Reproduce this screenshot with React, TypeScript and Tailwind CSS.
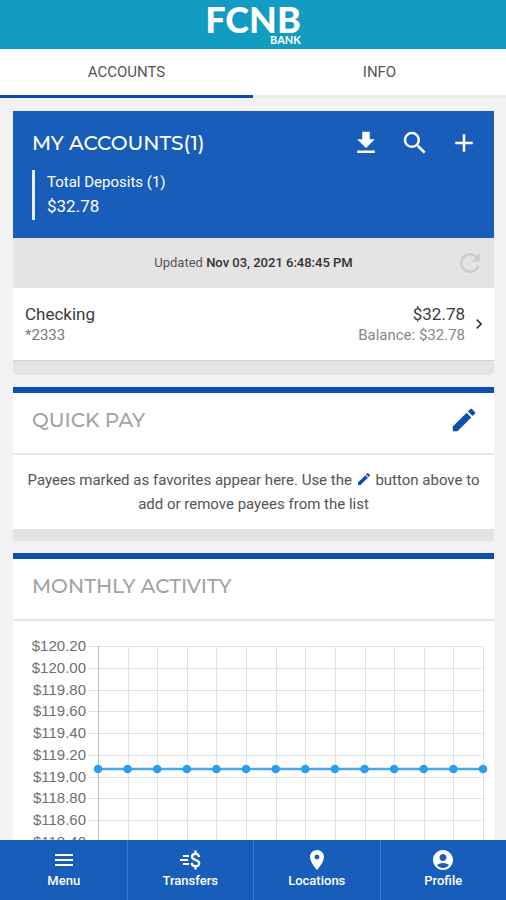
import type { ReactNode } from "react";
import {
  MdAccountCircle,
  MdAdd,
  MdChevronRight,
  MdEdit,
  MdFileDownload,
  MdLocationOn,
  MdMenu,
  MdRefresh,
  MdSearch,
} from "react-icons/md";

const TICKS = [
  "$120.20", "$120.00", "$119.80", "$119.60", "$119.40", "$119.20",
  "$119.00", "$118.80", "$118.60", "$118.40", "$118.20", "$118.00",
];
const LEFT = 85;
const RIGHT = 470;
const TOP = 25;
const STEP = 21.75;
const BOTTOM = TOP + STEP * (TICKS.length - 1);
const POINTS = Array.from({ length: 14 }, (_, i) => LEFT + ((RIGHT - LEFT) * i) / 13);
const VALUE_Y = 148;

function ActivityChart() {
  return (
    <svg viewBox="0 0 481 290" className="block h-auto w-full" role="img" aria-label="Monthly activity">
      {TICKS.map((label, i) => {
        const y = Math.round(TOP + STEP * i);
        return (
          <g key={label}>
            <line x1={LEFT - 10} x2={RIGHT} y1={y + 0.5} y2={y + 0.5} stroke="#e2e2e2" />
            <text
              x={73}
              y={y + 5}
              textAnchor="end"
              className="fill-[#707070] font-['Liberation_Sans',Arial,sans-serif] text-[15px]"
            >
              {label}
            </text>
          </g>
        );
      })}
      {POINTS.map((x, i) => (
        <line
          key={x}
          x1={Math.round(x) + 0.5}
          x2={Math.round(x) + 0.5}
          y1={TOP}
          y2={BOTTOM}
          stroke={i === 0 ? "#bdbdbd" : "#e2e2e2"}
        />
      ))}
      <line x1={LEFT} x2={RIGHT} y1={VALUE_Y} y2={VALUE_Y} stroke="#4aa6e8" strokeWidth={2.5} />
      {POINTS.map((x) => (
        <circle key={x} cx={x} cy={VALUE_Y} r={4.3} fill="#2b9fee" />
      ))}
    </svg>
  );
}

function TransferIcon() {
  return (
    <svg viewBox="0 0 24 24" className="size-6" fill="none" stroke="currentColor" strokeWidth="2" aria-hidden="true">
      <path d="M5 8h6M2 12h8M5 16h6" />
      <path
        strokeWidth="2.3"
        d="M21 9C20.8 7 19.500 5.800 17.500 5.800c-2 0-3.500 1.200-3.500 3 0 4 7.200 2.400 7.200 6.400 0 1.900-1.600 3-3.700 3s-3.700-1.200-3.800-3.300M17.500 2.500V6M17.500 18v3.500"
      />
    </svg>
  );
}

function IconButton({ label, children }: { label: string; children: ReactNode }) {
  return (
    <button type="button" aria-label={label} className="flex size-[30px] items-center justify-center text-[30px]">
      {children}
    </button>
  );
}

function Panel({ title, action, children }: { title: string; action?: ReactNode; children: ReactNode }) {
  return (
    <section className="border-t-6 border-[#0b50b0] bg-white">
      <div className="flex h-[62px] items-start justify-between border-b-2 border-[#e6e6e6] pt-3 pr-[15px] pl-[19px]">
        <h2 className="font-['Montserrat','Inter',sans-serif] text-[20px] leading-[30px] font-medium text-[#a3a3a3]">
          {title}
        </h2>
        {action}
      </div>
      {children}
    </section>
  );
}

const NAV = [
  { label: "Menu", icon: <MdMenu /> },
  { label: "Transfers", icon: <TransferIcon /> },
  { label: "Locations", icon: <MdLocationOn /> },
  { label: "Profile", icon: <MdAccountCircle /> },
];

export default function App() {
  return (
    <div className="flex h-screen flex-col bg-[#f2f2f2] font-['Roboto',sans-serif] text-[#3c3c3c]">
      <header className="flex h-[49px] shrink-0 justify-center bg-[#139cc1] text-white">
        <div className="flex flex-col items-end pt-1 font-['Lato',sans-serif]">
          <span className="text-[36px] leading-[30px] font-black">FCNB</span>
          <span className="text-[11px] leading-[11px] font-bold">BANK</span>
        </div>
      </header>

      <div role="tablist" className="grid h-[49px] shrink-0 grid-cols-2 bg-white text-[15px] text-[#555]">
        <button type="button" role="tab" aria-selected="true" className="border-b-3 border-[#0d4ba6]">
          ACCOUNTS
        </button>
        <button type="button" role="tab" aria-selected="false" className="border-b-3 border-[#ececec]">
          INFO
        </button>
      </div>

      <main className="flex min-h-0 flex-1 flex-col gap-3 overflow-y-auto pt-[13px] pr-3 pl-[13px] [scrollbar-width:none] *:shrink-0">
        <section className="bg-white">
          <div className="h-[127px] bg-[#195dba] pt-[17px] pr-[15px] pl-[19px] text-white">
            <div className="flex items-center justify-between">
              <h2 className="font-['Montserrat','Inter',sans-serif] text-[20px] leading-[30px] font-medium">
                MY ACCOUNTS(1)
              </h2>
              <div className="flex gap-[19px]">
                <IconButton label="Download"><MdFileDownload /></IconButton>
                <IconButton label="Search"><MdSearch /></IconButton>
                <IconButton label="Add account"><MdAdd /></IconButton>
              </div>
            </div>
            <div className="mt-3 h-[50px] border-l-3 border-white/90 pl-3">
              <p className="text-[15px] leading-6">Total Deposits (1)</p>
              <p className="text-[17px] leading-6">$32.78</p>
            </div>
          </div>
          <div className="grid h-[50px] grid-cols-[1fr_auto_1fr] items-center bg-[#e5e3e4] px-[9px]">
            <p className="col-start-2 text-[13px] text-[#555]">
              Updated <span className="font-medium text-[#333]">Nov 03, 2021 6:48:45 PM</span>
            </p>
            <div className="justify-self-end text-[#cdcbcc]">
              <IconButton label="Refresh"><MdRefresh /></IconButton>
            </div>
          </div>
          <button type="button" className="flex h-[73px] w-full items-center border-b border-[#d2d2d2] pr-[5px] pl-3 text-left">
            <span className="flex-1">
              <span className="block text-[17px] leading-[22px]">Checking</span>
              <span className="block text-[15px] leading-5 text-[#777]">*2333</span>
            </span>
            <span className="text-right">
              <span className="block text-[17px] leading-[22px]">$32.78</span>
              <span className="block text-[15px] leading-5 text-[#888]">Balance: $32.78</span>
            </span>
            <MdChevronRight className="ml-1 size-5" />
          </button>
          <div className="h-[14px] rounded-b-sm bg-[#e5e3e4]" />
        </section>

        <Panel
          title="QUICK PAY"
          action={
            <div className="text-[#0b50b0]">
              <IconButton label="Edit payees"><MdEdit /></IconButton>
            </div>
          }
        >
          <p className="px-3 py-[13px] text-center text-[15px] leading-6 text-[#555]">
            Payees marked as favorites appear here. Use the{" "}
            <MdEdit className="inline size-4 align-text-top text-[#0b50b0]" /> button above to add or remove payees
            from the list
          </p>
          <div className="h-3 bg-[#e5e3e4]" />
        </Panel>

        <Panel title="MONTHLY ACTIVITY">
          <ActivityChart />
        </Panel>
      </main>

      <nav className="grid h-[60px] shrink-0 grid-cols-4 bg-[#195dba] text-white">
        {NAV.map(({ label, icon }) => (
          <button
            key={label}
            type="button"
            className="flex flex-col items-center border-l border-[#3d78c9] pt-2 text-2xl first:border-transparent"
          >
            {icon}
            <span className="text-[13px] leading-[18px] font-medium">{label}</span>
          </button>
        ))}
      </nav>
    </div>
  );
}
